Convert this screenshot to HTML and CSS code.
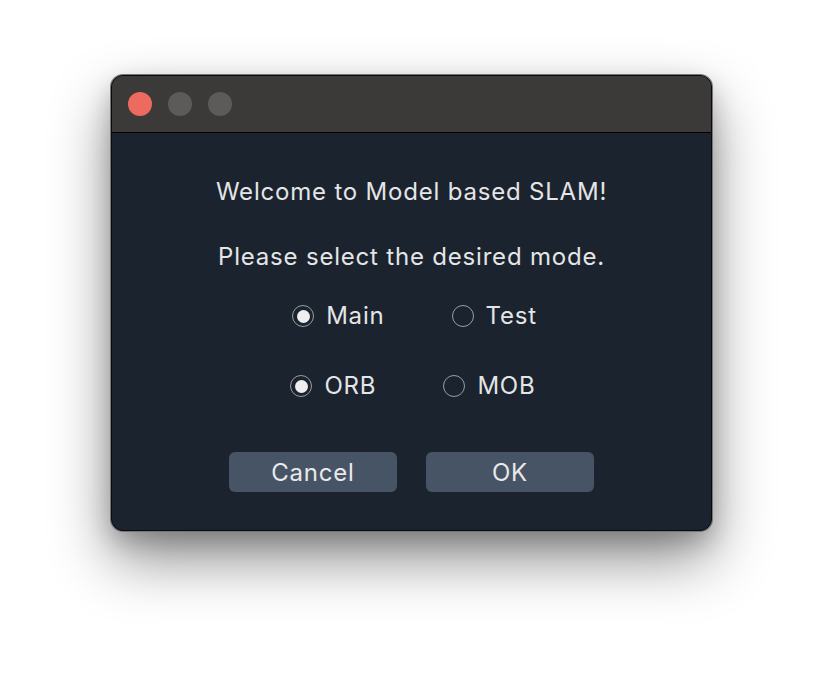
FILE: index.html
```html
<!DOCTYPE html>
<html>
<head>
<meta charset="utf-8">
<link rel="stylesheet" href="styles.css">
</head>
<body>
<div class="window">
  <div class="titlebar">
    <span class="light red"></span>
    <span class="light gray"></span>
    <span class="light gray"></span>
  </div>
  <div class="content">
    <p class="line l1">Welcome to Model based SLAM!</p>
    <p class="line l2">Please select the desired mode.</p>
    <div class="radios r1">
      <label class="radio"><span class="dot checked"></span>Main</label>
      <label class="radio"><span class="dot"></span>Test</label>
    </div>
    <div class="radios r2">
      <label class="radio"><span class="dot checked"></span>ORB</label>
      <label class="radio"><span class="dot"></span>MOB</label>
    </div>
    <div class="buttons">
      <button class="btn">Cancel</button>
      <button class="btn">OK</button>
    </div>
  </div>
</div>
</body>
</html>
```
FILE: styles.css
```css
html, body {
  margin: 0;
  padding: 0;
  background: #ffffff;
}
body {
  width: 824px;
  height: 680px;
  overflow: hidden;
  font-family: Inter, "Noto Sans", sans-serif;
}
.window {
  margin: 75px 0 0 111px;
  width: 601px;
  height: 456px;
  box-sizing: border-box;
  border-radius: 12px;
  border: 1px solid #0a0a0a;
  box-shadow: 0 0 0 1px #777777, 0 28px 60px rgba(0,0,0,0.45), 0 10px 25px rgba(0,0,0,0.2);
  background: #1b232e;
  overflow: hidden;
  display: flex;
  flex-direction: column;
}
.titlebar {
  height: 56px;
  background: #3c3a38;
  border-bottom: 1px solid #000000;
  display: flex;
  align-items: center;
  padding-left: 16px;
  gap: 16px;
  flex-shrink: 0;
}
.light {
  width: 24px;
  height: 24px;
  border-radius: 50%;
}
.light.red { background: #ed6a5e; }
.light.gray { background: #5c5b59; }
.content {
  display: flex;
  flex-direction: column;
  align-items: center;
  color: #e4e5e6;
  font-size: 24px;
  letter-spacing: 0.8px;
}
.line {
  margin: 0;
  line-height: 30px;
}
.l1 { margin-top: 44px; }
.l2 { margin-top: 35px; }
.radios {
  display: flex;
  line-height: 30px;
}
.r1 { margin-top: 29px; gap: 67px; margin-left: 6px; }
.r2 { margin-top: 40px; gap: 67px; margin-left: 3px; }
.radio {
  display: flex;
  align-items: center;
  gap: 12px;
}
.dot {
  width: 22px;
  height: 22px;
  box-sizing: border-box;
  border: 1.8px solid #9a9ea3;
  border-radius: 50%;
  display: flex;
  align-items: center;
  justify-content: center;
}
.dot.checked::after {
  content: "";
  width: 13px;
  height: 13px;
  border-radius: 50%;
  background: #eeeeee;
}
.buttons {
  display: flex;
  gap: 29px;
  margin-top: 51px;
}
.btn {
  width: 168px;
  height: 40px;
  border: none;
  border-radius: 6px;
  background: #475465;
  color: #e8e9ea;
  font-family: Inter, "Noto Sans", sans-serif;
  font-size: 24px;
  letter-spacing: 0.8px;
  padding: 0;
}
```
